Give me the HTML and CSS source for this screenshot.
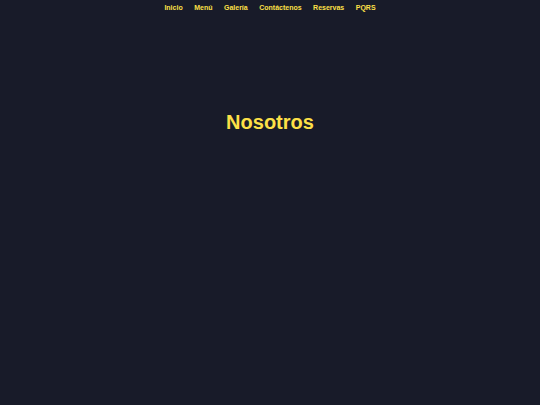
FILE: index.html
```html
<!DOCTYPE html>
<html lang="es">
<head>
<meta charset="utf-8">
<title>Nosotros</title>
<link rel="stylesheet" href="styles.css">
</head>
<body>
<nav class="nav">
  <a href="#">Inicio</a>
  <a href="#">Menú</a>
  <a href="#">Galería</a>
  <a href="#">Contáctenos</a>
  <a href="#">Reservas</a>
  <a href="#">PQRS</a>
</nav>
<main class="main">
  <h1 class="title">Nosotros</h1>
</main>
</body>
</html>
```
FILE: styles.css
```css
html, body {
  margin: 0;
  padding: 0;
  background: #181b29;
  height: 100%;
}
body {
  font-family: "Liberation Sans", Arial, sans-serif;
}
.nav {
  display: flex;
  justify-content: center;
  gap: 11.5px;
  padding-top: 3px;
  height: 12px;
}
.nav a {
  color: #fde047;
  font-weight: bold;
  font-size: 7px;
  line-height: 9px;
  text-decoration: none;
}
.main {
  display: flex;
  justify-content: center;
  padding-top: 95px;
}
.title {
  margin: 0;
  color: #fde047;
  font-size: 20px;
  font-weight: bold;
  line-height: 24px;
}
```
